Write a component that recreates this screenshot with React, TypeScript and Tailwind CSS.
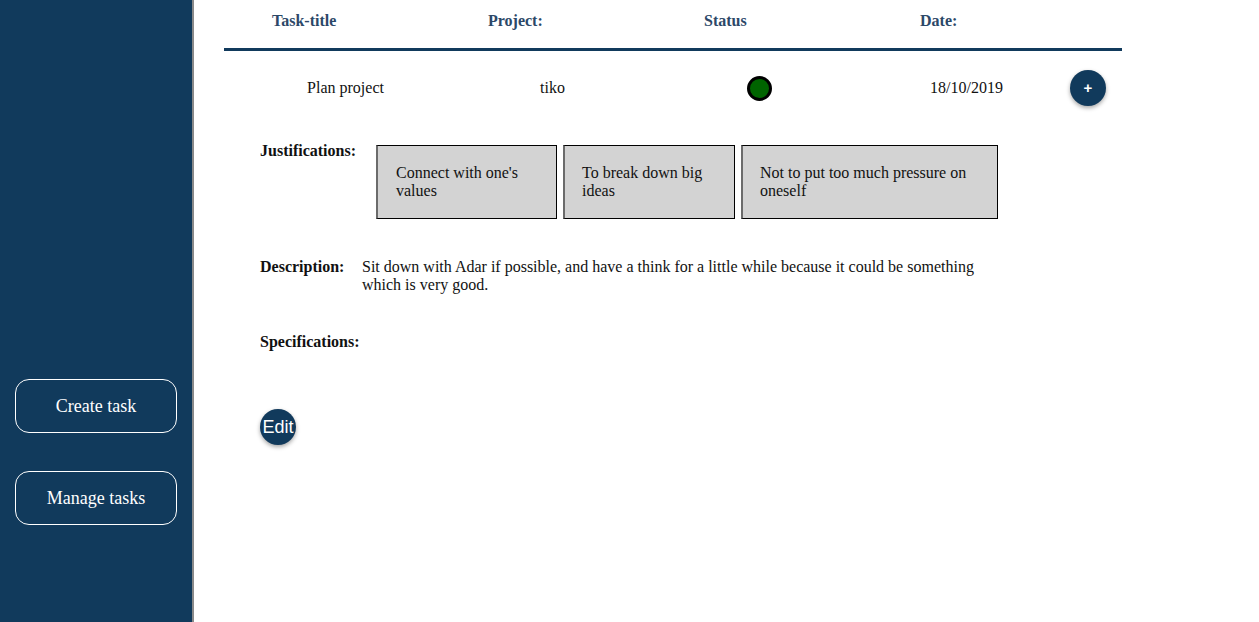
import React from "react";

const serif = { fontFamily: '"Liberation Serif", "Times New Roman", serif' };

export default function App() {
  return (
    <div className="flex w-[1259px] h-[622px] bg-white overflow-hidden" style={serif}>
      <aside className="w-[194px] h-full shrink-0 bg-[#113a5c] border-r-2 border-[#8a8a8a] flex flex-col px-[15px] pt-[379px] gap-[38px]">
        <button className="w-[162px] h-[54px] border border-white rounded-[14px] text-white text-[18px]" style={serif}>
          Create task
        </button>
        <button className="w-[162px] h-[54px] border border-white rounded-[14px] text-white text-[18px]" style={serif}>
          Manage tasks
        </button>
      </aside>
      <main className="flex-1 pl-[30px] text-[16px] leading-[18px] text-[#111]">
        <div className="w-[898px]">
          <div className="h-[51px] flex pt-[12px] font-bold text-[#2c4868] border-b-[3px] border-[#113a5c]">
            <div className="w-[216px] pl-[48px]">Task-title</div>
            <div className="w-[216px] pl-[48px]">Project:</div>
            <div className="w-[216px] pl-[48px]">Status</div>
            <div className="w-[216px] pl-[48px]">Date:</div>
          </div>
          <div className="h-[74px] flex items-center pl-[18px]">
            <div className="w-[207px] text-center">Plan project</div>
            <div className="w-[207px] text-center">tiko</div>
            <div className="w-[207px] flex justify-center">
              <div className="w-[25px] h-[25px] rounded-full bg-[#006400] border-[3px] border-black"></div>
            </div>
            <div className="w-[207px] text-center">18/10/2019</div>
            <button className="w-[36px] h-[36px] rounded-full bg-[#113a5c] text-white text-[15px] font-bold shadow-[0_2px_4px_rgba(0,0,0,0.35)] flex items-center justify-center" style={{ fontFamily: '"Liberation Sans", Arial, sans-serif' }}>
              +
            </button>
          </div>
        </div>
        <div className="pl-[36px] mt-[20px]">
          <div className="flex">
            <div className="w-[116px] font-bold -mt-[3px]">Justifications:</div>
            <div className="flex gap-[6px]">
              <div className="w-[181px] h-[74px] bg-[#d3d3d3] border border-black border-l-[2px] border-l-[#6b6b6b] pt-[18px] pl-[18px] pr-[10px]">
                Connect with one's values
              </div>
              <div className="w-[172px] h-[74px] bg-[#d3d3d3] border border-black border-l-[2px] border-l-[#6b6b6b] pt-[18px] pl-[17px] pr-[10px]">
                To break down big ideas
              </div>
              <div className="w-[257px] h-[74px] bg-[#d3d3d3] border border-black border-l-[2px] border-l-[#6b6b6b] pt-[18px] pl-[17px] pr-[10px]">
                Not to put too much pressure on oneself
              </div>
            </div>
          </div>
          <div className="flex mt-[39px]">
            <div className="w-[102px] font-bold">Description:</div>
            <div className="w-[630px]">
              Sit down with Adar if possible, and have a think for a little while because it could be something which is very good.
            </div>
          </div>
          <div className="mt-[39px] font-bold">Specifications:</div>
          <button className="mt-[58px] w-[36px] h-[36px] rounded-full bg-[#113a5c] text-white text-[18px] shadow-[0_2px_4px_rgba(0,0,0,0.35)] flex items-center justify-center" style={{ fontFamily: '"Liberation Sans", Arial, sans-serif' }}>
            Edit
          </button>
        </div>
      </main>
    </div>
  );
}
